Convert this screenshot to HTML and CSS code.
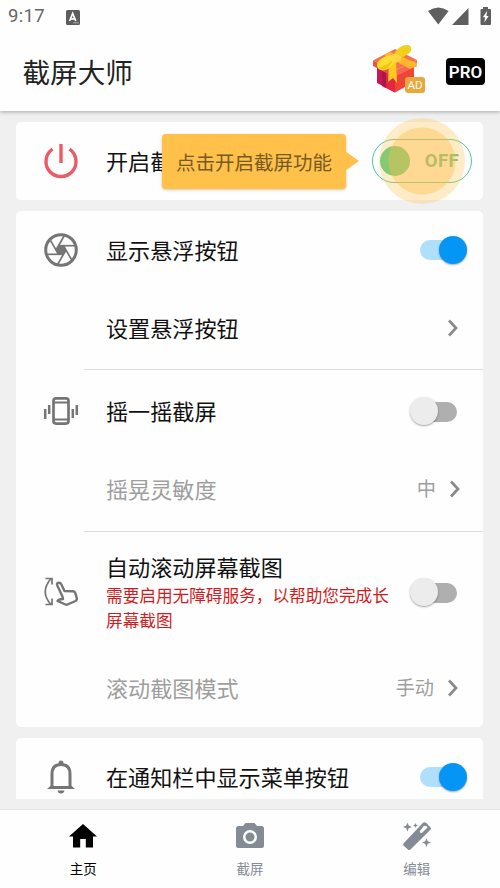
FILE: index.html
```
<!DOCTYPE html>
<html lang="zh-CN">
<head>
<meta charset="utf-8">
<title>截屏大师</title>
<link rel="stylesheet" href="styles.css">
</head>
<body>
<div class="app">
  <header class="header">
    <div class="status">
      <span class="time">9:17</span>
      <svg class="status-app" width="14" height="15" viewBox="0 0 14 15"><rect width="14" height="15" rx="1.500" fill="#5d5d5d"/><path d="M3.600 11 6.700 3.500 9.800 11M4.800 8.800h3.800" fill="none" stroke="#fff" stroke-width="1.700"/><path d="M7.500 12.800h1m1 0h1m1 0h1" stroke="#fff"/></svg>
      <svg class="status-icons" width="64" height="19" viewBox="0 0 64 19" fill="#5f5f5f"><path d="M0 4Q10.300-3 20.600 4L10.300 17.500z"/><path d="M24 18 40.500 1V18z"/><path d="M55 0h5v2h2q1 0 1 1v14q0 1-1 1h-8.500q-1 0-1-1V3q0-1 1-1H55z"/><path d="m59.200 3.800-4.400 6.400h2.300l-.8 5.200 4.300-6.500h-2.200z" fill="#fff"/></svg>
    </div>
    <div class="titlebar">
      <h1>截屏大师</h1>
      <div class="gift">
        <svg width="46" height="50" viewBox="0 0 46 50">
          <path d="M4 20 22 28V48.500L4 39z" fill="#c91650"/>
          <path d="M11 24 22 28V48.500L11 43z" fill="#e52640"/>
          <path d="M22 28 41 19V38L22 48.500z" fill="#ef4438"/>
          <path d="M9 23 13 25V44L9 42z" fill="#a9184d"/>
          <path d="M0 16.500 22 5 44 16 21 27z" fill="#f4714f"/>
          <path d="M0 16.500 21 27v6L0 22z" fill="#ee5148"/>
          <path d="M21 27 44 16v6L21 33z" fill="#fa674f"/>
          <path d="M11 11 17 8 44 19v3l-7 3z" fill="#ffb52c"/>
          <path d="M16 19 23 15 24 39 20 34 15 38z" fill="#ffc91f"/>
          <path d="M20 16C20 7 28 1 34 1c6 0 5 7 1 9q-4 3-11 6" fill="#f2cf18"/>
          <path d="M23 13C18 8 4 15 4 21c0 4 4 6 8 5 5-1 9-6 11-12" fill="#ffde2c"/>
          <path d="M6 23q7-1 14-7-4 9-10 9.500-3 0-4-2.500" fill="#ecc518"/>
          <path d="m17 12 5-2.500 6 2.500v5l-6 2-5-3z" fill="#ffd546"/>
        </svg>
        <span class="ad">AD</span>
      </div>
      <span class="pro">PRO</span>
    </div>
  </header>

  <main class="content">
    <section class="card">
      <div class="row power-row">
        <div class="icon"><svg width="36" height="36" viewBox="0 0 36 36" fill="none" stroke="#e85d66" stroke-width="3.400"><path d="M9.500 6.200A15 15 0 1 0 26.500 6.200M18 1V20"/></svg></div>
        <span class="label">开启截屏</span>
        <div class="power-switch"><i></i><span>OFF</span><div class="pulse"></div></div>
        <div class="tooltip">点击开启截屏功能</div>
      </div>
    </section>

    <section class="card">
      <div class="row">
        <div class="icon"><svg width="36" height="36" viewBox="-18 -18 36 36" fill="none" stroke="#757575"><circle r="15.300" stroke-width="3"/><path d="M-2.500-4.300H2.500L5 0 2.500 4.300H-2.500L-5 0z" fill="#757575"/><g stroke-width="1.700"><path id="blade" d="M-2.500-4.300H14.500"/><use href="#blade" transform="rotate(60)"/><use href="#blade" transform="rotate(120)"/><use href="#blade" transform="rotate(180)"/><use href="#blade" transform="rotate(240)"/><use href="#blade" transform="rotate(300)"/></g></svg></div>
        <span class="label">显示悬浮按钮</span><span class="switch on"></span>
      </div>
      <div class="row"><div class="icon"></div><span class="label">设置悬浮按钮</span><svg class="chevron plain" width="12" height="18" viewBox="0 0 12 18"><path d="m2 1.500 7 7.500-7 7.500"/></svg></div>
      <div class="divider"></div>
      <div class="row">
        <div class="icon"><svg width="36" height="28" viewBox="0 0 36 28" fill="none" stroke="#757575"><rect x="10.500" y="1.400" width="15" height="25.200" rx="2.500" stroke-width="2.700"/><path d="M11 5.500h14M11 22.500h14" stroke-width="2"/><path d="M2.200 12v10M6.200 8v9M29.800 12v9M33.800 8v10" stroke-width="2.500"/></svg></div>
        <span class="label">摇一摇截屏</span><span class="switch"></span>
      </div>
      <div class="row muted"><div class="icon"></div><span class="label">摇晃灵敏度</span><span class="value">中</span><svg class="chevron" width="12" height="18" viewBox="0 0 12 18"><path d="m2 1.500 7 7.500-7 7.500"/></svg></div>
      <div class="divider tall"></div>
      <div class="row scroll-row">
        <div class="icon"><svg width="36" height="30" viewBox="0 0 36 30" fill="none" stroke="#757575"><path d="M8 1.500Q-3.500 15 8 27.500M2.500 1.500H9v6M2.500 27.500H9v-6" stroke-width="1.700"/><path d="M19.500 19.500 14.300 8.500Q13.500 6 15.500 5.700q2-.2 2.800 1.600L21.500 14l8.500.3q1.800.2 2.300 1.800l1.500 5q.4 2-1.300 2.900L24.500 27.500q-1 .5-2 0l-8-3.500q1-1.700 5.500-2z" stroke-width="2.400" stroke-linejoin="round"/></svg></div>
        <div class="stack"><span class="label">自动滚动屏幕截图</span><p>需要启用无障碍服务，以帮助您完成长屏幕截图</p></div>
        <span class="switch"></span>
      </div>
      <div class="row muted"><div class="icon"></div><span class="label">滚动截图模式</span><span class="value">手动</span><svg class="chevron plain" width="12" height="18" viewBox="0 0 12 18"><path d="m2 1.500 7 7.500-7 7.500"/></svg></div>
    </section>

    <section class="card">
      <div class="row">
        <div class="icon"><svg width="28" height="34" viewBox="0 0 28 34"><path d="M5 27V14C5 8 8 4.500 14 4.500s9 3.500 9 9.500v13" fill="none" stroke="#757575" stroke-width="3"/><path d="M0 29l4.500-4h19l4.500 4zM11.500 5V3a2.500 2.500 0 0 1 5 0v2zM10.500 30.500h7q-.5 3-3.500 3t-3.500-3" fill="#757575"/><path d="M6.500 24.500h15v1.500h-15z" fill="#fefefe"/></svg></div>
        <span class="label">在通知栏中显示菜单按钮</span><span class="switch on"></span>
      </div>
    </section>
  </main>

  <nav class="nav">
    <a class="active"><svg width="28" height="28" viewBox="0 0 28 28"><path d="M14 2 0 14.500h4V25.500h7.200V17h5.600v8.500H24V14.500h4z"/></svg>主页</a>
    <a><svg width="28" height="28" viewBox="0 0 28 28"><path fill-rule="evenodd" d="M9.500 1h9l2.500 3h4.500Q28 4 28 6.500v17q0 2.500-2.500 2.500h-23Q0 26 0 23.500v-17Q0 4 2.500 4H7zM14 8a7 7 0 1 0 0 14 7 7 0 0 0 0-14m0 2.500a4.500 4.500 0 1 1 0 9 4.500 4.500 0 0 1 0-9"/></svg>截屏</a>
    <a><svg width="28" height="28" viewBox="0 0 28 28"><path fill-rule="evenodd" d="M.7 21.300 20 .8q1.500-1.300 3 0l4.400 4.400q1.100 1.300 0 2.500L7.500 27.500q-1.300 1.100-2.500 0L.7 23.700q-1-1.200 0-2.400M21 3.800l-4 5q-.7 1 .2 1.800t1.800.1l5-4.700q.7-1-.2-1.800z"/><path d="m4.500.7 1.200 2.900L9 5 5.700 6.300 4.500 9.500 3.200 6.300 0 5l3.200-1.400zM12.500 1l.8 1.700 1.700.8-1.700.8-.8 1.700-.8-1.700-1.700-.8 1.700-.8zM23.500 16l1.200 3.200L28 20.500l-3.300 1.300-1.200 3.200-1.300-3.200-3.200-1.300 3.200-1.300z"/></svg>编辑</a>
  </nav>
</div>
</body>
</html>
```
FILE: styles.css
```
* { box-sizing: border-box; }
body { margin: 0; background: #f0f0f0; font-family: Roboto, "Noto Sans CJK SC", sans-serif; color: #111; }
svg { display: block; flex: none; }
.app { height: 888px; display: flex; flex-direction: column; overflow: hidden; }

.header { position: relative; z-index: 2; flex: none; height: 111px; background: #fefefe; box-shadow: 0 1px 4px rgba(0,0,0,.3); }
.status { display: flex; align-items: center; height: 33px; padding: 0 7px 0 8px; }
.time { width: 58px; font-size: 18.5px; line-height: 33px; color: #666; letter-spacing: .3px; }
.status-app { margin-top: 1px; }
.status-icons { margin-left: auto; margin-right: 1px; }
.titlebar { display: flex; align-items: center; height: 78px; padding: 0 15px 0 22.500px; }
h1 { flex: 1; margin: 0; padding-top: 3px; font-size: 27.600px; line-height: 40px; font-weight: 400; color: #222; }
.gift { position: relative; width: 52px; height: 50px; margin-right: 21px; margin-top: -7px; }
.ad { position: absolute; left: 32px; top: 33px; width: 20px; height: 16px; border-radius: 3px; background: #eaa73b; color: #fff; font-size: 11.500px; line-height: 16px; text-align: center; }
.pro { width: 39px; height: 27px; margin-top: -1px; border-radius: 4px; background: #000; color: #fff; font-size: 17px; font-weight: 600; line-height: 28px; text-align: center; }

.content { flex: none; height: 688px; padding: 11px 17px 0 16px; overflow: hidden; display: flex; flex-direction: column; gap: 11px; }
.card { flex: none; background: #fefefe; border-radius: 5px; }
.row { position: relative; display: flex; align-items: center; height: 78px; padding-right: 16px; }
.icon { flex: none; width: 90px; display: flex; justify-content: center; }
.label { flex: 1; padding-top: 2px; font-size: 22.100px; line-height: 32px; white-space: nowrap; }
.muted .label, .muted .value { color: #9e9e9e; }
.value { padding-top: 2px; font-size: 19.200px; line-height: 30px; margin-right: 13px; }
.chevron { margin-right: 6px; fill: none; stroke: #8a8a8a; stroke-width: 2.700; }
.chevron.plain { margin-right: 8px; }
.divider { height: 5px; padding-top: 2px; margin-left: 68px; }
.divider::after { content: ""; display: block; height: 1px; background: #dcdcdc; }
.divider.tall { height: 6px; padding-top: 3px; }
.scroll-row { height: 115px; }
.stack { flex: 1; }
.stack .label { display: block; }
.stack p { margin: 0; width: 284px; font-size: 16.650px; line-height: 25px; color: #d11b20; }

.switch { position: relative; flex: none; width: 48px; height: 30px; }
.switch::before { content: ""; position: absolute; left: 11px; top: 6px; width: 27px; height: 20px; border-radius: 0 10px 10px 0; background: #afafaf; }
.switch::after { content: ""; position: absolute; left: -9px; top: 1px; width: 28px; height: 28px; border-radius: 50%; background: #ececec; box-shadow: 0 1px 2px rgba(0,0,0,.35); }
.switch.on::before { left: 1px; top: 5px; width: 32px; border-radius: 10px 0 0 10px; background: #b0dffc; }
.switch.on::after { left: 20px; background: #0596f5; }

.power-row { padding-right: 11px; }
.power-switch { position: relative; display: flex; align-items: center; justify-content: space-between; width: 100px; height: 44px; padding: 0 12px 0 7px; border: 1px solid #51c99d; border-radius: 22px; color: #51bd8f; font-size: 18.500px; font-weight: 700; letter-spacing: .4px; }
.power-switch i { width: 30px; height: 30px; border-radius: 50%; background: #50cd89; }
.pulse { position: absolute; left: 6px; top: -22px; width: 86px; height: 86px; border-radius: 50%; background: radial-gradient(circle, rgba(255,190,70,.58) 0 33px, rgba(255,193,72,.3) 34px 43px); }
.tooltip { position: absolute; left: 146px; top: 12px; width: 184px; height: 55px; border-radius: 4px; background: #ffc14a; color: #765a25; font-size: 19.500px; line-height: 59px; text-align: center; white-space: nowrap; box-shadow: 0 1px 3px rgba(130,90,0,.35); }
.tooltip::after { content: ""; position: absolute; left: 183px; top: 17px; border: solid transparent; border-width: 10px 0 10px 14px; border-left-color: #ffc14a; }

.nav { display: flex; margin-top: 10px; height: 79px; background: #fefefe; border-top: 1px solid #e6e6e6; }
.nav a { flex: 1; display: flex; flex-direction: column; align-items: center; padding-top: 12px; font-size: 13.500px; line-height: 20px; color: #858b95; fill: #858b95; gap: 9px; }
.nav .active { color: #000; fill: #000; }
```
